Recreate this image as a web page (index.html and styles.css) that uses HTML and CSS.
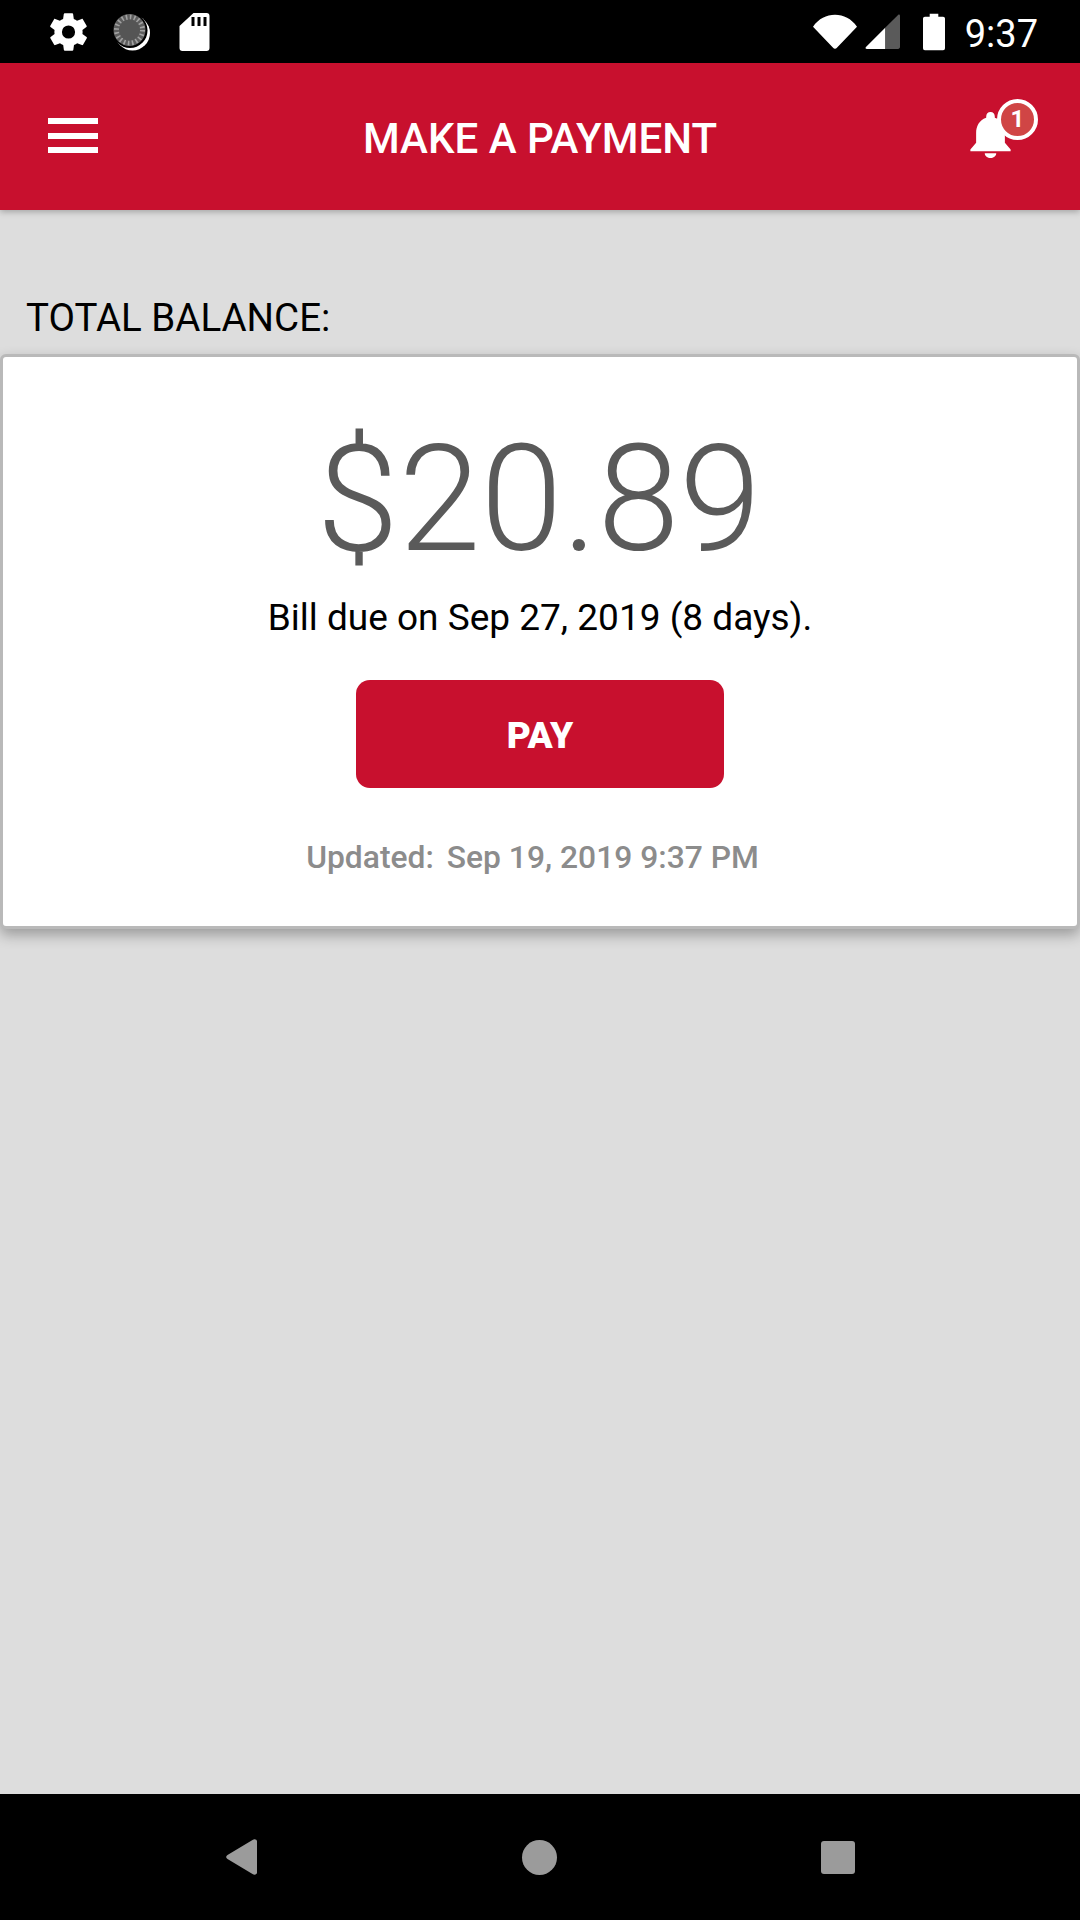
FILE: index.html
```html
<!DOCTYPE html>
<html lang="en">
<head>
    <meta charset="UTF-8">
    <meta name="viewport" content="width=device-width, initial-scale=1.0">
    <title>Make a Payment</title>
    <link rel="stylesheet" href="styles.css">
</head>

<body>
    <div class="app">

        <!-- Status bar -->
        <div class="status-bar">
            <div class="status-left">
                <svg width="37" height="38" viewBox="2.2 1.9 19.6 20.2" fill="#fff">
                    <path fill-rule="evenodd" d="M19.4 13c.04-.32.1-.66.1-1s-.06-.68-.1-1l2.1-1.65c.2-.15.25-.42.12-.64l-2-3.46c-.12-.22-.4-.3-.6-.22l-2.5 1c-.52-.4-1.08-.73-1.7-.98l-.37-2.65A.5.5 0 0 0 14 2h-4a.5.5 0 0 0-.5.42l-.37 2.65c-.62.25-1.18.59-1.7.98l-2.5-1c-.22-.08-.48 0-.6.22l-2 3.46c-.13.22-.07.49.12.64L4.6 11c-.04.32-.1.66-.1 1s.06.68.1 1l-2.1 1.65c-.2.15-.25.42-.12.64l2 3.46c.12.22.4.3.6.22l2.5-1c.52.4 1.08.73 1.7.98l.37 2.65c.04.24.25.42.5.42h4c.25 0 .46-.18.5-.42l.37-2.65c.62-.25 1.18-.59 1.7-.98l2.5 1c.22.08.48 0 .6-.22l2-3.46c.13-.22.07-.49-.12-.64L19.4 13zM12 15.500a3.500 3.500 0 1 1 0-7 3.500 3.500 0 0 1 0 7z"/>
                </svg>
                <svg width="38" height="38" viewBox="0 0 38 38">
                    <circle cx="19.500" cy="20" r="17.500" fill="#fff"/>
                    <circle cx="17" cy="17.500" r="17.500" fill="#000"/>
                    <circle cx="16.500" cy="17" r="16" fill="#5e5e5e"/>
                    <circle cx="16.500" cy="17" r="13" fill="none" stroke="#a2a2a2" stroke-width="5" stroke-dasharray="1.6 2.480"/>
                    <circle cx="16.500" cy="17" r="10.500" fill="#555"/>
                </svg>
                <svg class="sd-icon" width="31" height="38" viewBox="0 0 30 38" fill="#fff">
                    <path fill-rule="evenodd" d="M14 0h13a3 3 0 0 1 3 3v32a3 3 0 0 1-3 3H3a3 3 0 0 1-3-3V13zM12 4v9h3V4zm6 0v9h3V4zm6 0v9h3V4z"/>
                </svg>
            </div>
            <div class="status-right">
                <svg width="44" height="37" viewBox="0 0 46 37" fill="#fff">
                    <path d="M0 13.500C6 5 14 1 23 1s17 4 23 12.500L25 35.500c-1 1.500-3 1.500-4 0z"/>
                </svg>
                <svg class="signal" width="35" height="35" viewBox="0 0 36 36">
                    <path fill="#fff" d="M21 14 1 34c-1 1-.5 2 1 2h19z"/>
                    <path fill="#5a5a5a" d="M21 14 34 1c1-1 2-.5 2 1v32c0 1-1 2-2 2H21z"/>
                </svg>
                <svg class="battery" width="22" height="38" viewBox="0 0 23 38" fill="#fff">
                    <path d="M7 0h9v3h5a2 2 0 0 1 2 2v31a2 2 0 0 1-2 2H2a2 2 0 0 1-2-2V5a2 2 0 0 1 2-2h5z"/>
                </svg>
                <span class="clock">9:37</span>
            </div>
        </div>

        <!-- Red header -->
        <header class="top-bar">
            <div class="menu-icon">
                <span></span>
                <span></span>
                <span></span>
            </div>
            <h1 class="title">MAKE A PAYMENT</h1>
            <div class="bell-wrap">
                <svg width="41" height="46" viewBox="0 0 42 48" fill="#fff">
                    <path d="M21 0c2.800 0 4.500 2 4.500 5v1C33 8.500 36 15 36 22v10l6 7v2H0v-2l6-7V22C6 15 9 8.500 16.500 6V5c0-3 1.700-5 4.500-5zM15 43h12c0 3-3 5-6 5s-6-2-6-5z"/>
                </svg>
                <span class="badge">1</span>
            </div>
        </header>

        <!-- Balance -->
        <main class="content">
            <h2 class="balance-label">TOTAL BALANCE:</h2>
            <section class="balance-card">
                <div class="amount">$20.89</div>
                <p class="due">Bill due on Sep 27, 2019 (8 days).</p>
                <button class="pay-button">PAY</button>
                <p class="updated"><span class="updated-label">Updated:</span>Sep 19, 2019 9:37 PM</p>
            </section>
        </main>

        <!-- Android nav bar -->
        <footer class="nav-bar">
            <svg width="31" height="36" viewBox="0 0 31 36" fill="#9b9b9b">
                <path d="M26.500 1c2-1.500 4.500-.5 4.500 1.500v31c0 2-2.500 3-4.500 1.500L1.500 20c-1.800-1-1.800-3 0-4z"/>
            </svg>
            <span class="home-dot"></span>
            <span class="recent-box"></span>
        </footer>

    </div>
</body>
</html>
```

FILE: styles.css
```css
* {
    box-sizing: border-box;
}

body {
    margin: 0;
    padding: 0;
    font-family: Roboto, "Liberation Sans", sans-serif;
    background: #dddddd;
}

.app {
    width: 1080px;
    height: 1920px;
    display: flex;
    flex-direction: column;
    overflow: hidden;
}

/* Status bar */
.status-bar {
    height: 63px;
    background: #000;
    color: white;
    display: flex;
    align-items: center;
    justify-content: space-between;
    padding: 0 42px 0 50px;
    flex-shrink: 0;
}

.status-left {
    display: flex;
    align-items: center;
    gap: 26px;
}

.sd-icon {
    margin-left: 2px;
}

.status-right {
    display: flex;
    align-items: center;
}

.signal {
    margin-left: 8px;
}

.battery {
    margin-left: 23px;
}

.clock {
    margin-left: 20px;
    padding-top: 4px;
    font-size: 38px;
    line-height: 38px;
}

/* Header */
.top-bar {
    height: 147px;
    background: #c8102e;
    color: white;
    display: flex;
    align-items: center;
    justify-content: center;
    position: relative;
    box-shadow: 0px 2px 6px rgba(0, 0, 0, 0.25);
    flex-shrink: 0;
    z-index: 1;
}

.title {
    margin: 4px 0 0 0;
    font-size: 42px;
    font-weight: 500;
}

.menu-icon {
    position: absolute;
    left: 48px;
    top: 55px;
    width: 50px;
    display: flex;
    flex-direction: column;
    gap: 8.500px;
}

.menu-icon span {
    height: 6px;
    background: white;
}

.bell-wrap {
    position: absolute;
    left: 970px;
    top: 49px;
}

.badge {
    position: absolute;
    left: 27px;
    top: -13px;
    width: 41px;
    height: 41px;
    border: 4px solid white;
    border-radius: 50%;
    background: #d04545;
    font-size: 24px;
    font-weight: 700;
    line-height: 33px;
    text-align: center;
}

/* Balance */
.content {
    flex: 1;
    padding-top: 85px;
}

.balance-label {
    margin: 0;
    padding-left: 26px;
    font-size: 38.500px;
    font-weight: 400;
    line-height: 46px;
    color: #000;
}

.balance-card {
    width: 1080px;
    height: 575px;
    margin-top: 13px;
    background: white;
    border: 3px solid #b9b9b9;
    border-radius: 6px;
    box-shadow: 0px 6px 14px rgba(0, 0, 0, 0.3);
    display: flex;
    flex-direction: column;
    align-items: center;
}

.amount {
    margin: 68px 2px 0 0;
    font-size: 147.500px;
    font-weight: 300;
    line-height: 150px;
    color: #5a5a5a;
}

.due {
    margin: 21px 0 0 0;
    font-size: 37px;
    line-height: 44px;
    color: #000;
}

.pay-button {
    width: 368px;
    height: 108px;
    margin-top: 40px;
    padding-top: 3px;
    background: #c8102e;
    color: white;
    border: none;
    border-radius: 14px;
    font-family: inherit;
    font-size: 37px;
    font-weight: 900;
}

.updated {
    margin: 50px 15px 0 0;
    font-size: 31.800px;
    font-weight: 500;
    line-height: 38px;
    color: #8c8c8c;
}

.updated-label {
    margin-right: 13px;
}

/* Nav bar */
.nav-bar {
    height: 126px;
    background: #000;
    flex-shrink: 0;
    display: flex;
    align-items: center;
    padding: 0 225px 0 226px;
    justify-content: space-between;
}

.home-dot {
    width: 35px;
    height: 35px;
    border-radius: 50%;
    background: #9b9b9b;
}

.recent-box {
    width: 34px;
    height: 33px;
    border-radius: 3px;
    background: #9b9b9b;
}
```
